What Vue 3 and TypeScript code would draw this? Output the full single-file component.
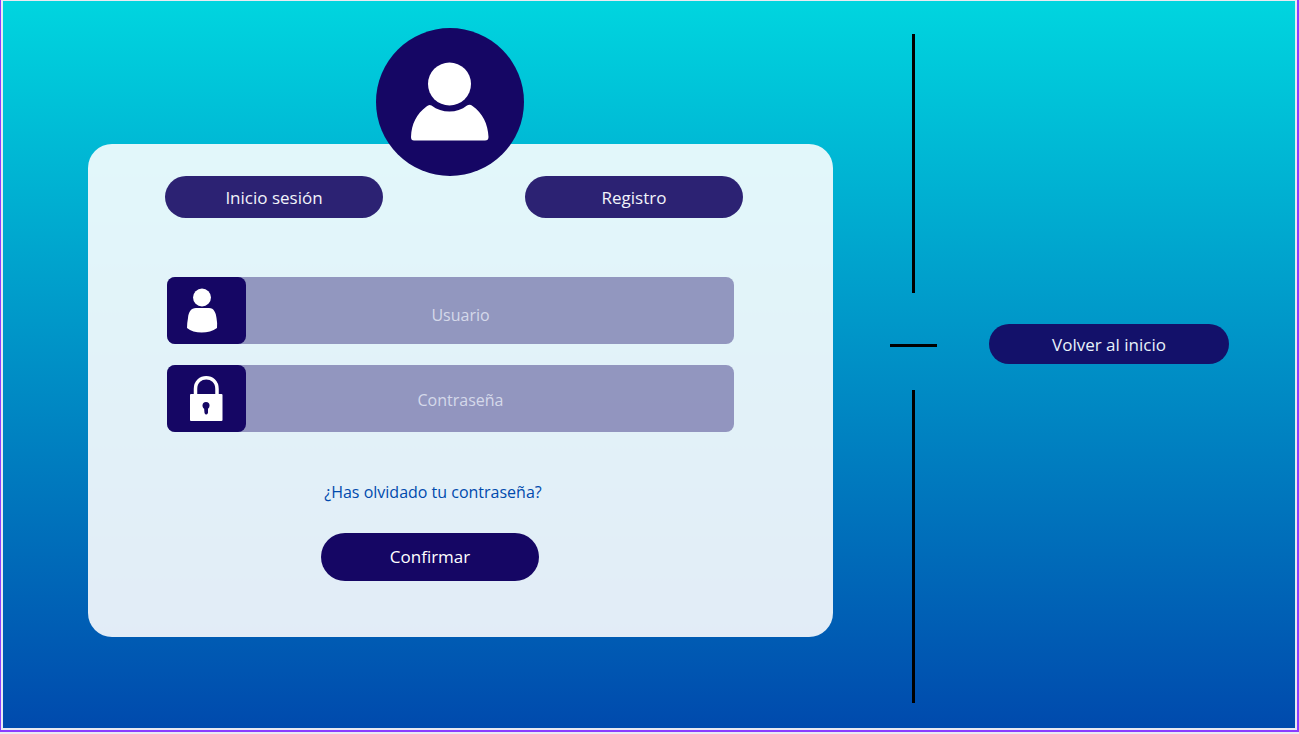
<script setup lang="ts">
import { ref } from 'vue'

const user = ref('')
const password = ref('')
</script>

<template>
  <div class="frame">
    <main class="stage">
      <section class="login">
        <div class="avatar">
          <svg viewBox="0 0 148 148" aria-hidden="true">
            <circle cx="73.500" cy="56" r="21.500" fill="#fff" />
            <path
              fill="#fff"
              d="M50.500 78.500Q53 76 55.500 77.500C66 85.500 81 85.500 91 77.500Q94 76 96.500 78C106.500 85 112 96 112.500 109Q112.500 112.500 109 112.500H38Q35 112.500 35 109C35.500 96 40.500 86 50.500 78.500Z"
            />
          </svg>
        </div>
        <form class="card" @submit.prevent>
          <nav class="tabs">
            <button type="button" class="pill">Inicio sesión</button>
            <button type="button" class="pill">Registro</button>
          </nav>
          <div class="fields">
            <div class="field">
              <label class="icon" for="user" aria-label="Usuario">
                <svg viewBox="0 0 79 67" aria-hidden="true">
                  <circle cx="35" cy="20.500" r="9" fill="#fff" />
                  <path
                    fill="#fff"
                    d="M29 31H42C47 31 49 36 49.500 41Q50.500 46 50 51C42 57 27 57 20 51Q20 46 21 41C21.500 35 24 31 29 31Z"
                  />
                </svg>
              </label>
              <input id="user" v-model="user" class="user" type="text" placeholder="Usuario" />
            </div>
            <div class="field">
              <label class="icon" for="password" aria-label="Contraseña">
                <svg viewBox="0 0 79 67" aria-hidden="true">
                  <path d="M28.500 31V24C28.500 9 50 9 50 24V31" fill="none" stroke="#fff" stroke-width="3.500" />
                  <rect x="23" y="29" width="32.500" height="27" rx="1" fill="#fff" />
                  <circle cx="39" cy="40.500" r="3.500" fill="#150664" />
                  <path d="M37 42H41L41 48Q39 51 37.500 48Z" fill="#150664" />
                </svg>
              </label>
              <input id="password" v-model="password" class="password" type="password" placeholder="Contraseña" />
            </div>
          </div>
          <a class="forgot" href="#">¿Has olvidado tu contraseña?</a>
          <button type="submit" class="pill confirm">Confirmar</button>
        </form>
      </section>
      <div class="divider" aria-hidden="true">
        <span class="upper"></span>
        <span class="dash"></span>
        <span class="lower"></span>
      </div>
      <button type="button" class="pill back">Volver al inicio</button>
    </main>
  </div>
</template>

<style>
body {
  margin: 0;
  background: #e9eaf2;
}
</style>

<style scoped>
.frame {
  box-sizing: border-box;
  display: flex;
  min-height: calc(100vh - 2px);
  padding: 1px 2px 2px;
  border: solid #8b3dff;
  border-width: 0 2px 2px 1px;
  background: #e9eaf2;
  font-family: "Open Sans", "Noto Sans", sans-serif;
}

.stage {
  flex: 1;
  display: flex;
  align-items: stretch;
  padding: 27px 66px 25px 85px;
  background: linear-gradient(#00d5df, #004aad);
}

.login {
  flex: 1;
  display: flex;
  flex-direction: column;
  align-items: center;
}

.avatar {
  position: relative;
  width: 148px;
  height: 148px;
  margin: 0 21px -32px 0;
  border-radius: 50%;
  background: #150664;
}

.avatar svg,
.icon svg {
  display: block;
  width: 100%;
  height: 100%;
}

.card {
  box-sizing: border-box;
  width: 100%;
  display: flex;
  flex-direction: column;
  align-items: center;
  padding: 32px 90px 56px 77px;
  border-radius: 24px;
  background: rgba(255, 255, 255, 0.885);
}

.tabs {
  align-self: stretch;
  display: flex;
  justify-content: space-between;
}

.pill {
  width: 218px;
  height: 42px;
  padding: 2px 0 0;
  border: 0;
  border-radius: 24px;
  background: #2c2273;
  color: #f2f4fa;
  font: 500 17px/24px "Open Sans", "Noto Sans", sans-serif;
  cursor: pointer;
}

.fields {
  align-self: stretch;
  display: flex;
  flex-direction: column;
  gap: 21px;
  margin: 59px 9px 0 2px;
}

.field {
  display: flex;
  height: 67px;
  border-radius: 8px;
  background: rgba(21, 6, 100, 0.39);
}

.icon {
  flex: none;
  width: 79px;
  border-radius: 8px;
  background: #150664;
}

input {
  flex: 1;
  min-width: 0;
  padding: 0 59px 0 0;
  border: 0;
  outline: 0;
  background: transparent;
  color: #d5d9ea;
  font: 400 16px/24px "Open Sans", "Noto Sans", sans-serif;
  text-align: center;
}

.user {
  padding-top: 8px;
}

.password {
  padding-top: 3px;
}

input::placeholder {
  color: #d5d9ea;
  opacity: 1;
}

.forgot {
  margin: 48px 42px 0 0;
  color: #004aad;
  font-size: 16px;
  line-height: 24px;
  text-decoration: none;
}

.confirm {
  height: 48px;
  margin: 29px 48px 0 0;
  padding: 0;
  background: #150664;
  color: #fff;
}

.divider {
  width: 47px;
  display: flex;
  flex-direction: column;
  align-items: center;
  margin: 6px 1px 0 57px;
}

.upper,
.lower {
  width: 3px;
  background: #000;
}

.upper {
  height: 259px;
}

.dash {
  width: 100%;
  height: 3px;
  margin: 51px 0 43px;
  background: #000;
}

.lower {
  flex: 1;
}

.back {
  width: 240px;
  height: 40px;
  margin: 296px 0 0 51px;
  background: #13116a;
  color: #e8f3fa;
}
</style>
